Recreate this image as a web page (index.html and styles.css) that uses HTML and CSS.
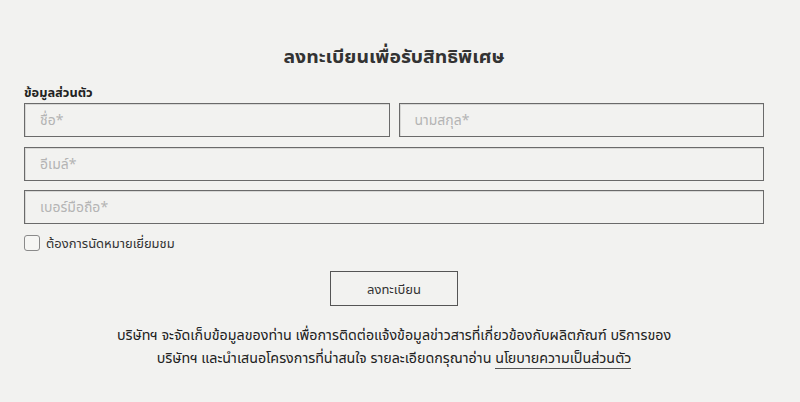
FILE: index.html
```html
<!DOCTYPE html>
<html lang="th">
<head>
<meta charset="utf-8">
<link rel="stylesheet" href="styles.css">
</head>
<body>
<main class="form-wrap">
  <h1 class="title">ลงทะเบียนเพื่อรับสิทธิพิเศษ</h1>
  <div class="section-label">ข้อมูลส่วนตัว</div>
  <div class="row two">
    <div class="field">ชื่อ*</div>
    <div class="field">นามสกุล*</div>
  </div>
  <div class="row">
    <div class="field">อีเมล์*</div>
  </div>
  <div class="row tight">
    <div class="field">เบอร์มือถือ*</div>
  </div>
  <label class="check">
    <span class="box"></span>
    <span class="check-text">ต้องการนัดหมายเยี่ยมชม</span>
  </label>
  <div class="actions">
    <button class="submit">ลงทะเบียน</button>
  </div>
  <p class="note">บริษัทฯ จะจัดเก็บข้อมูลของท่าน เพื่อการติดต่อแจ้งข้อมูลข่าวสารที่เกี่ยวข้องกับผลิตภัณฑ์ บริการของ<br>บริษัทฯ และนำเสนอโครงการที่น่าสนใจ รายละเอียดกรุณาอ่าน <a class="policy" href="#">นโยบายความเป็นส่วนตัว</a></p>
</main>
</body>
</html>
```
FILE: styles.css
```css
html, body {
  margin: 0;
  padding: 0;
  background: #f2f2f0;
}
body {
  font-family: Tahoma, "Noto Sans Thai UI", "Noto Sans Thai", "Noto Sans", "DejaVu Sans", sans-serif;
  color: #333;
}
.form-wrap {
  width: 740px;
  margin-left: 24px;
  padding-top: 40px;
}
.title {
  margin: 0;
  text-align: center;
  font-size: 19.4px;
  font-weight: bold;
  color: #333;
  line-height: 32px;
}
.section-label {
  margin-top: 11px;
  font-size: 12.8px;
  font-weight: bold;
  line-height: 18px;
  color: #222;
}
.row {
  display: flex;
  gap: 9px;
  margin-top: 10px;
}
.row.tight { margin-top: 9px; }
.section-label + .row { margin-top: 2px; }
.field {
  flex: 1;
  height: 32px;
  border: 1px solid #6a6a6a;
  box-shadow: inset 1px 1px 0 #d8d8d6;
  box-sizing: content-box;
  padding: 0 15px;
  font-size: 14px;
  line-height: 32px;
  color: #b4b4b4;
}
.check {
  display: flex;
  align-items: center;
  gap: 6px;
  margin-top: 9px;
  font-size: 13px;
  line-height: 20px;
  color: #333;
}
.box {
  width: 14px;
  height: 14px;
  border: 1px solid #8a8a8a;
  border-radius: 3px;
  background: #f6f6f4;
}
.actions {
  display: flex;
  justify-content: center;
  margin-top: 18px;
}
.submit {
  width: 128px;
  height: 35px;
  border: 1px solid #555;
  background: transparent;
  font-family: inherit;
  font-size: 13px;
  color: #333;
  padding: 0;
}
.note {
  margin: 17px 0 0;
  text-align: center;
  font-size: 14.3px;
  line-height: 23px;
  color: #222;
}
.policy {
  color: #222;
  text-decoration: none;
  border-bottom: 1px solid #555;
  padding-bottom: 1px;
}
```
